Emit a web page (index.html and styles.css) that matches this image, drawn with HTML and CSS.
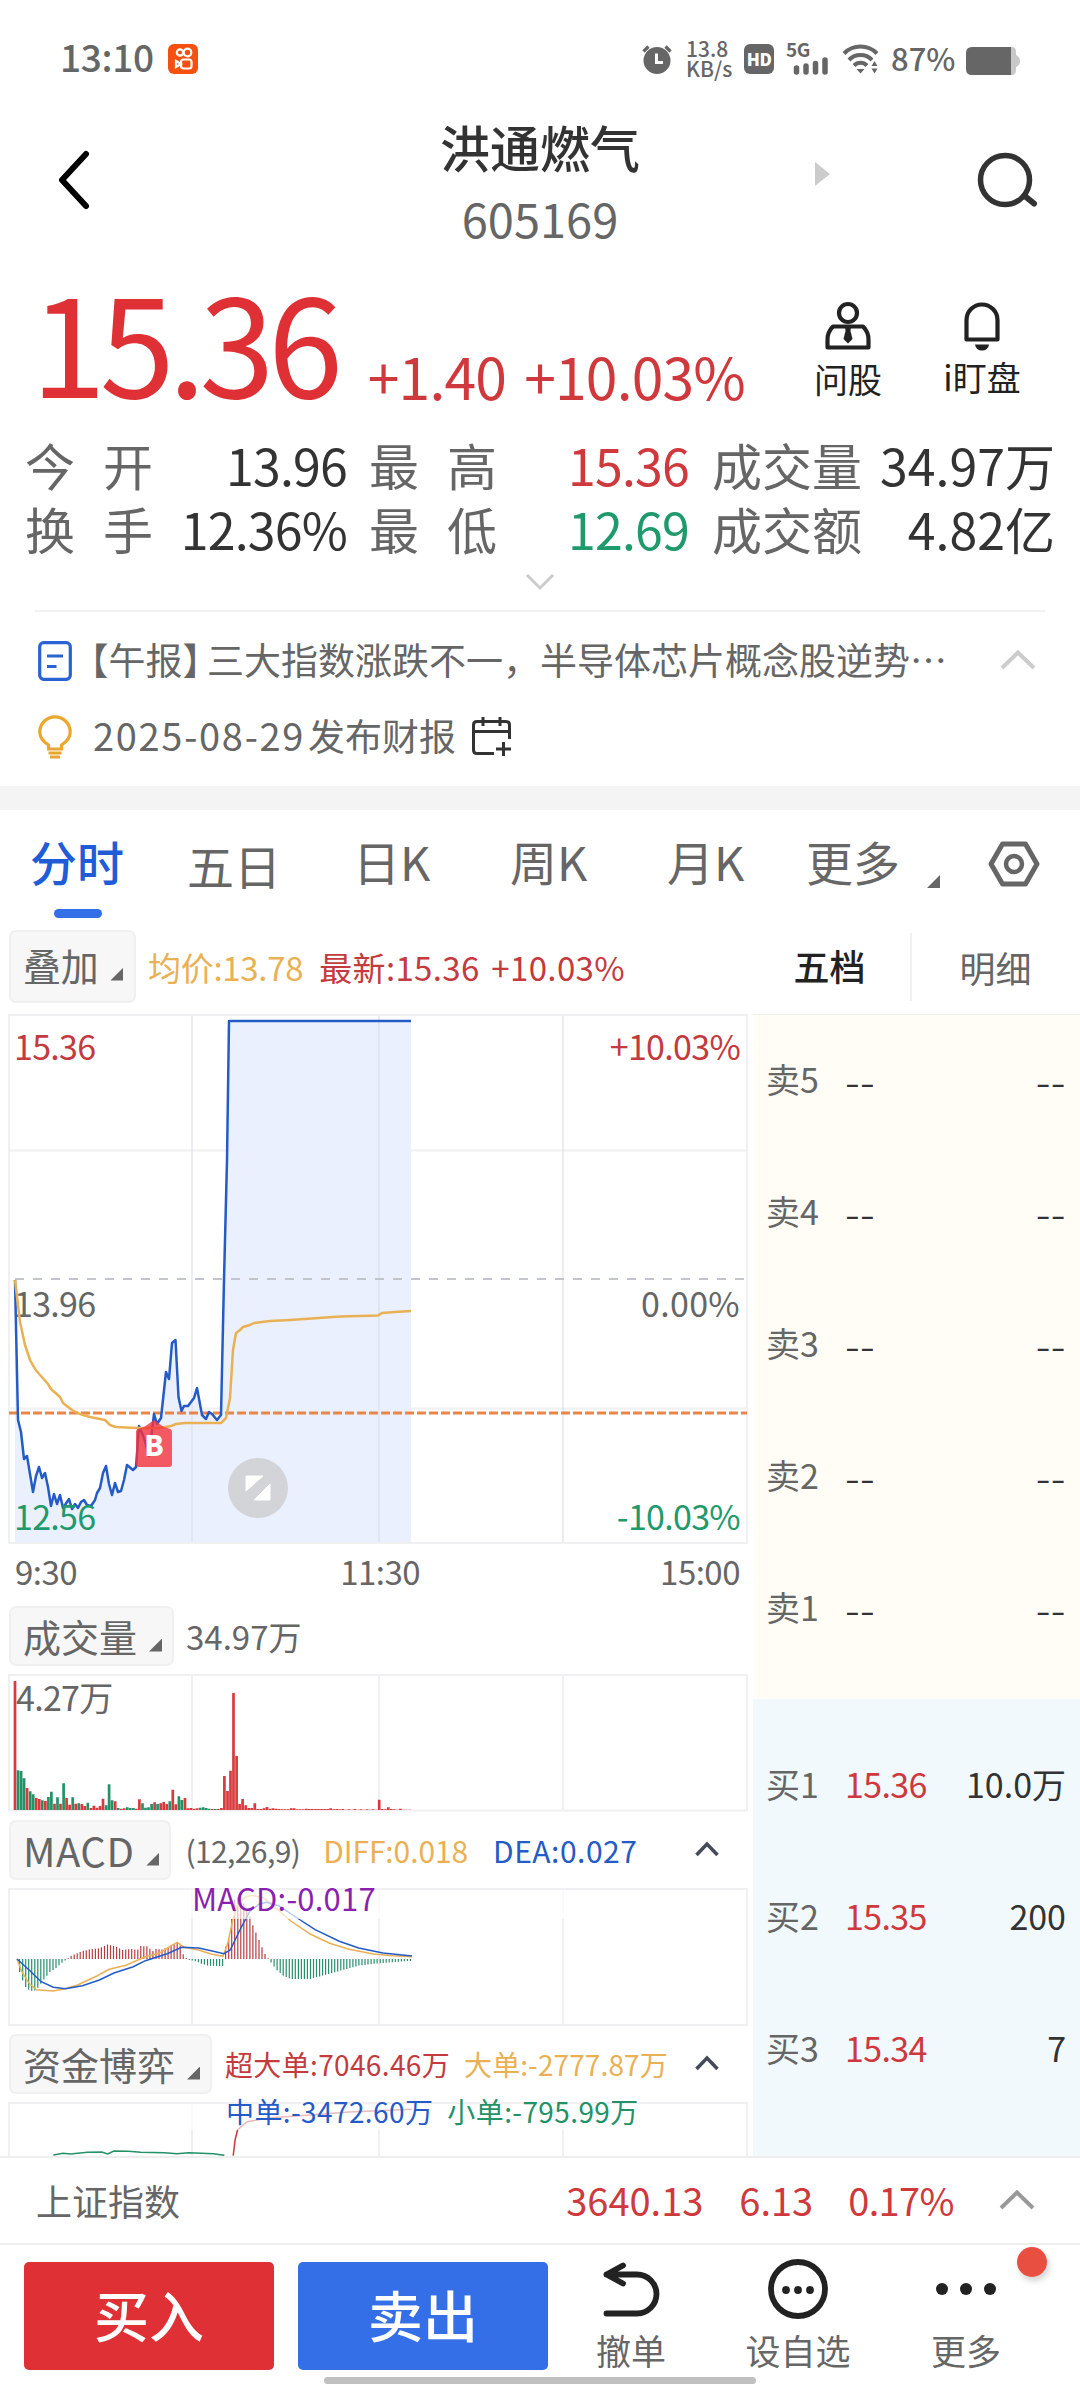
FILE: index.html
```html
<!DOCTYPE html>
<html lang="zh-CN">
<head>
<meta charset="utf-8">
<title>洪通燃气 605169</title>
<link rel="stylesheet" href="styles.css">
</head>
<body>
<div class="app">
  <header class="status">
    <span class="clock">13:10</span>
    <svg class="app-badge" width="30" height="30" viewBox="0 0 30 30"><rect width="30" height="30" rx="6" fill="#f5500f"/><g fill="none" stroke="#fff" stroke-width="2.2"><circle cx="12" cy="8.5" r="3.2"/><circle cx="19.5" cy="8.5" r="3.8"/><rect x="13" y="15.5" width="10.5" height="9" rx="2.5"/><path d="M13 20l-5-3v6z"/></g></svg>
    <span class="grow"></span>
    <svg class="alarm" width="32" height="30" viewBox="0 0 32 30"><circle cx="16" cy="16.500" r="13.500" fill="#666"/><path d="M2.500 7.500l5-5M29.500 7.500l-5-5" stroke="#666" stroke-width="3.200" fill="none"/><path d="M15.500 9.500v9h6.500" stroke="#fff" stroke-width="3" fill="none"/></svg>
    <span class="speed"><span>13.8</span><span>KB/s</span></span>
    <span class="hd">HD</span>
    <span class="cell"><b>5G</b><svg width="46" height="32" viewBox="0 0 46 32"><path d="M12.500 29v-4M22 29v-6M31.500 29v-8.500M41 29V17" stroke="#666" stroke-width="5.500" stroke-linecap="round"/></svg></span>
    <svg class="wifi" width="38" height="30" viewBox="0 0 38 30"><g fill="none" stroke="#666" stroke-width="4"><path d="M2 9.500a23 23 0 0 1 33 0M7 16a16 16 0 0 1 23 0M12 21.500a9 9 0 0 1 13 0"/></g><path d="M14.500 25h8l-4 4.500z" fill="#666"/><path d="M26 18h13v13H26z" fill="#fff"/><path d="M29.500 22l3-5 3 5zM29.500 24.500l3 5 3-5z" fill="#666"/></svg>
    <span class="pct">87%</span>
    <svg class="battery" width="54" height="28" viewBox="0 0 54 28"><path d="M44 0h2q4 0 4 5v3q4 2 4 6t-4 6v3q0 5-4 5h-2z" fill="#c8c8c8"/><path d="M6 0h39v28H6q-6 0-6-6V6q0-6 6-6z" fill="#666"/></svg>
  </header>

  <nav class="titlebar">
    <svg class="back" width="36" height="64" viewBox="0 0 36 64"><path d="M31 6L7 32l24 26" fill="none" stroke="#000" stroke-width="6" stroke-linecap="round" stroke-linejoin="round"/></svg>
    <div class="title"><h1>洪通燃气</h1><span class="code">605169</span></div>
    <svg class="next" width="15" height="24" viewBox="0 0 15 24"><path d="M0 0l15 12L0 24z" fill="#ccc"/></svg>
    <svg class="search" width="64" height="58" viewBox="0 0 64 58"><circle cx="29" cy="29" r="24.500" fill="none" stroke="#333" stroke-width="5.500"/><path d="M50 46l8 6.500" stroke="#333" stroke-width="6" stroke-linecap="round"/></svg>
  </nav>

  <section class="quote">
    <span class="price">15.36</span>
    <span class="delta">+1.40</span>
    <span class="delta rate">+10.03%</span>
    <span class="grow"></span>
    <div class="tool ask"><svg width="48" height="50" viewBox="0 0 48 50"><g fill="none" stroke="#222" stroke-width="4.200"><circle cx="24" cy="12" r="9"/><path d="M9 25.500h30q6 6 5.500 14v7H3.500v-7q-.5-8 5.500-14z" stroke-linejoin="round"/></g><path d="M21 26h6l-.5 4 2 8-4.500 4.500-4.500-4.500 2-8z" fill="#222"/></svg><span>问股</span></div>
    <div class="tool watch"><svg width="48" height="50" viewBox="0 0 48 50"><path d="M8.500 38.500V19a15.500 15.500 0 0 1 31 0v19.500z" fill="none" stroke="#222" stroke-width="4.200" stroke-linejoin="round"/><path d="M17 43.500h14q-1 6-7 6t-7-6z" fill="#222"/></svg><span>i盯盘</span></div>
  </section>

  <section class="stats">
    <span class="k two">今<i></i>开</span><span class="v">13.96</span>
    <span class="k two">最<i></i>高</span><span class="v up">15.36</span>
    <span class="k">成交量</span><span class="v wide">34.97万</span>
    <span class="k two">换<i></i>手</span><span class="v">12.36%</span>
    <span class="k two">最<i></i>低</span><span class="v down">12.69</span>
    <span class="k">成交额</span><span class="v wide">4.82亿</span>
  </section>
  <svg class="more-down" width="30" height="18" viewBox="0 0 30 18"><path d="M2 2l13 13L28 2" fill="none" stroke="#ccc" stroke-width="3"/></svg>

  <section class="news">
    <div class="news-row">
      <svg width="34" height="40" viewBox="0 0 34 40"><rect x="1.700" y="1.700" width="30.600" height="36.600" rx="4" fill="none" stroke="#2a62d4" stroke-width="3.200"/><path d="M9 15h16M9 25.500h9.500" stroke="#2a62d4" stroke-width="3.200"/></svg>
      <p class="headline"><span class="half">【</span>午报<span class="half close">】</span>三大指数涨跌不一，半导体芯片概念股逆势…</p>
      <svg class="fold" width="36" height="20" viewBox="0 0 36 20"><path d="M2 18L18 2.500 34 18" fill="none" stroke="#ccc" stroke-width="4"/></svg>
    </div>
    <div class="news-row">
      <svg width="34" height="44" viewBox="0 0 34 44"><g fill="none" stroke="#eaa72e" stroke-width="3.200"><path d="M10.500 34v-4C4 26 1.800 21.500 1.800 17a15.200 15.200 0 0 1 30.400 0c0 4.500-2.200 9-8.700 13v4z"/><path d="M10.500 38h13M12 42h10"/></g></svg>
      <p class="report"><span class="date">2025-08-29</span> <span>发布财报</span></p>
      <svg width="42" height="42" viewBox="0 0 42 42"><path d="M23 37.500H6q-3.500 0-3.500-3.500V9q0-3.500 3.500-3.500h29q3.500 0 3.500 3.500v14M2.500 15.500h36M12 1v9M29 1v9M32.500 26v14M25 33h15" fill="none" stroke="#333" stroke-width="3"/></svg>
    </div>
  </section>

  <nav class="tabs">
    <span class="tab on">分时</span><span class="tab t5">五日</span><span class="tab">日K</span><span class="tab">周K</span><span class="tab">月K</span><span class="tab">更多</span>
    <i class="tri"></i>
    <svg width="52" height="46" viewBox="0 0 52 46"><path d="M14.500 3h23l11.500 20-11.500 20h-23L3 23z" fill="none" stroke="#666" stroke-width="5" stroke-linejoin="round"/><circle cx="26" cy="23" r="8" fill="none" stroke="#666" stroke-width="4.500"/></svg>
  </nav>

  <div class="subbar">
    <span class="chip overlay">叠加<i class="tri"></i></span>
    <span class="avg">均价:13.78</span><span class="last">最新:15.36 +10.03%</span>
    <span class="grow"></span>
    <span class="level on">五档</span><span class="level">明细</span>
  </div>

  <main class="body">
    <div class="charts">
      <svg class="plot" width="752" height="534" viewBox="0 1012 752 534">
        <path d="M9 1150.500H747M9 1408.500H747" stroke="#f0f0f2" stroke-width="2"/>
        <path d="M15 1543V1280L18 1420 21 1432 24 1459 27 1456 33 1492 36 1476 39 1467 42 1478 45 1473 48 1487 51 1506 54 1494 57 1504 60 1495 63 1508 69 1499 72 1509 75 1504 78 1508 81 1502 84 1500 87 1505 91 1506 95 1500 97 1493 100 1488 103 1473 106 1466 109 1484 112 1495 115 1483 118 1492 121 1491 124 1480 127 1465 133 1470 136 1467 139 1426 144 1438 149 1456 154 1414 157 1424 161 1418 166 1372 169 1379 172 1343 175.500 1340 178.500 1397 181.500 1411 184 1406 188 1406 194 1398 197 1388 202 1415 206 1419 209 1412 212 1414 217 1420 221 1415 224 1280 227 1160 229 1021H411V1543z" fill="#eaf0fe"/>
        <path d="M192 1015V1543M379 1015V1543M563 1015V1543" stroke="#d8dce8" stroke-opacity=".5" stroke-width="2"/>
        <rect x="9" y="1015" width="738" height="528" fill="none" stroke="#f0f0f2" stroke-width="2"/>
        <path d="M15 1279H747" stroke="#c2c4cb" stroke-width="2" stroke-dasharray="9 9"/>
        <path d="M9 1413H747" stroke="#e8864a" stroke-width="3" stroke-dasharray="9 3"/>
        <g class="labels"><text x="14" y="1060" fill="#c43a3e">15.36</text><text x="14" y="1317" fill="#666">13.96</text>
        <text x="740" y="1060" fill="#c43a3e" text-anchor="end">+10.03%</text><text x="740" y="1317" fill="#666" text-anchor="end" class="zero">0.00%</text><text x="740" y="1530" fill="#1f9a6c" text-anchor="end">-10.03%</text></g>
        <path d="M15 1280L18 1420 21 1432 24 1459 27 1456 33 1492 36 1476 39 1467 42 1478 45 1473 48 1487 51 1506 54 1494 57 1504 60 1495 63 1508 69 1499 72 1509 75 1504 78 1508 81 1502 84 1500 87 1505 91 1506 95 1500 97 1493 100 1488 103 1473 106 1466 109 1484 112 1495 115 1483 118 1492 121 1491 124 1480 127 1465 133 1470 136 1467 139 1426 144 1438 149 1456 154 1414 157 1424 161 1418 166 1372 169 1379 172 1343 175.500 1340 178.500 1397 181.500 1411 184 1406 188 1406 194 1398 197 1388 202 1415 206 1419 209 1412 212 1414 217 1420 221 1415 224 1280 227 1160 229 1021H411" fill="none" stroke="#245bc7" stroke-width="2.500" stroke-linejoin="round"/>
        <path d="M15 1280L20 1322 25 1345 30 1360 35 1369 40 1375 48 1384 51 1389 60 1397 63 1403 72 1410 80 1414 90 1417 105 1420 110 1425 116 1427 137 1428 160 1428 171 1426 176 1424 185 1423H221L226 1418 230 1398 233 1350 236 1333 240 1330 243 1327 250 1325 254 1323 270 1321 290 1320 340 1316.500 378 1315.500 382 1313 395 1312 411 1311" fill="none" stroke="#eab054" stroke-width="2.500" stroke-linejoin="round"/>
        <path d="M154 1420l7 5q3 3 8 3.500 3 .5 3 4V1464q0 3-3 3h-30q-3 0-3-3V1432q0-3 3-3.500 5-.5 8-3.500z" fill="#f5333b" fill-opacity=".8"/>
        <text x="154" y="1456" text-anchor="middle" class="mark">B</text>
        <circle cx="258" cy="1488" r="30" fill="#d3d4d8"/>
        <path d="M246 1476h17l-17 15zM270 1484v16h-16z" fill="#fff" stroke="#fff"/>
        <g class="labels"><text x="14" y="1530" fill="#1f9a6c">12.56</text></g>
      </svg>
      <div class="axis"><span>9:30</span><span class="mid">11:30</span><span>15:00</span></div>

      <div class="head"><span class="chip">成交量<i class="tri"></i></span><span class="total">34.97万</span></div>
      <svg class="plot gap" width="752" height="138" viewBox="0 1674 752 138">
        <path d="M192 1675V1810M379 1675V1810M563 1675V1810" stroke="#f0f0f2" stroke-width="2"/>
        <rect x="9" y="1675" width="738" height="135.500" fill="none" stroke="#f0f0f2" stroke-width="2"/>
        <g class="labels"><text x="16" y="1711" fill="#666">4.27万</text></g>
        <path id="volUp" stroke="#d83a3e" stroke-width="2.700"/><path id="volDown" stroke="#249268" stroke-width="2.700"/>
      </svg>

      <div class="head second"><span class="chip macd">MACD<i class="tri"></i></span><span class="legend"><span>(12,26,9)</span><span class="orange diff">DIFF:0.018</span><span class="blue dea">DEA:0.027</span></span>
        <svg class="up-arrow" width="26" height="16" viewBox="0 0 26 16"><path d="M2.500 14L13 3l10.500 11" fill="none" stroke="#454a5a" stroke-width="3.500"/></svg></div>
      <div class="overlaid">
        <svg class="plot" width="752" height="138" viewBox="0 1888 752 138">
          <path d="M192 1889V2025M379 1889V2025M563 1889V2025" stroke="#f0f0f2" stroke-width="2"/>
          <rect x="9" y="1889" width="738" height="136" fill="none" stroke="#f0f0f2" stroke-width="2"/>
          <path id="macdUp" stroke="#b83c40" stroke-width="1.200"/><path id="macdDown" stroke="#25906a" stroke-width="1.200"/>
          <path id="diff" fill="none" stroke="#eab054" stroke-width="1.500"/><path id="dea" fill="none" stroke="#245bc7" stroke-width="1.500"/>
          <path d="M12 1890H744V1919H12z" fill="#fff" fill-opacity=".65"/>
        </svg>
        <span class="wrapped purple">MACD:-0.017</span>
      </div>

      <div class="head third"><span class="chip">资金博弈<i class="tri"></i></span><span class="legend funds"><span class="red">超大单:7046.46万</span><span class="orange">大单:-2777.87万</span></span>
        <svg class="up-arrow" width="26" height="16" viewBox="0 0 26 16"><path d="M2.500 14L13 3l10.500 11" fill="none" stroke="#454a5a" stroke-width="3.500"/></svg></div>
      <div class="overlaid">
        <svg class="plot" width="752" height="54" viewBox="0 2102 752 54">
          <path d="M192 2103V2160M379 2103V2160M563 2103V2160" stroke="#f0f0f2" stroke-width="2"/>
          <rect x="9" y="2103" width="738" height="80" fill="none" stroke="#f0f0f2" stroke-width="2"/>
          <path id="big" fill="none" stroke="#c43a3e" stroke-width="1.500"/><path id="small" fill="none" stroke="#249268" stroke-width="1.500"/>
          <path d="M12 2104H744V2130H12z" fill="#fff" fill-opacity=".65"/>
        </svg>
        <span class="wrapped flows"><span class="blue">中单:-3472.60万</span><span class="green">小单:-795.99万</span></span>
      </div>
    </div>

    <aside class="book">
      <div class="asks">
        <div class="row"><span>卖5</span><b>--</b><b class="q">--</b></div>
        <div class="row"><span>卖4</span><b>--</b><b class="q">--</b></div>
        <div class="row"><span>卖3</span><b>--</b><b class="q">--</b></div>
        <div class="row"><span>卖2</span><b>--</b><b class="q">--</b></div>
        <div class="row"><span>卖1</span><b>--</b><b class="q">--</b></div>
      </div>
      <div class="bids">
        <div class="row"><span>买1</span><em>15.36</em><em class="q">10.0万</em></div>
        <div class="row"><span>买2</span><em>15.35</em><em class="q">200</em></div>
        <div class="row"><span>买3</span><em>15.34</em><em class="q">7</em></div>
      </div>
    </aside>
  </main>

  <div class="index"><span class="name">上证指数</span><span class="i1">3640.13</span><span class="i2">6.13</span><span class="i3">0.17%</span>
    <svg width="36" height="20" viewBox="0 0 36 20"><path d="M2 18L18 2.500 34 18" fill="none" stroke="#999" stroke-width="4"/></svg></div>

  <footer class="actions">
    <button class="buy">买入</button><button class="sell">卖出</button>
    <div class="act undo"><svg width="62" height="56" viewBox="0 0 62 56"><path d="M23 3.500L6.500 12.500 23 21.500M6.500 12.500H37a19.500 19.500 0 0 1 0 39H6.500" fill="none" stroke="#222" stroke-width="5.800" stroke-linecap="round" stroke-linejoin="round"/></svg><span>撤单</span></div>
    <div class="act fav"><svg width="62" height="62" viewBox="0 0 62 62"><circle cx="31" cy="31" r="27" fill="none" stroke="#222" stroke-width="5.800"/><g fill="#222"><circle cx="19" cy="32" r="3.900"/><circle cx="31" cy="32" r="3.900"/><circle cx="43" cy="32" r="3.900"/></g></svg><span>设自选</span></div>
    <div class="act dots"><svg width="62" height="62" viewBox="0 0 62 62"><g fill="#222"><circle cx="7" cy="31" r="6"/><circle cx="31" cy="31" r="6"/><circle cx="55" cy="31" r="6"/></g></svg><span>更多</span><i class="badge"></i></div>
  </footer>
  <div class="home"></div>
</div>
<script src="script.js"></script>
</body>
</html>
```
FILE: styles.css
```css
* { box-sizing: border-box; }
body { margin: 0; background: #fff; font-family: "Noto Sans CJK SC", "Noto Sans", sans-serif; color: #666; }
h1, p { margin: 0; font-weight: 400; }
b, em { font-weight: 400; font-style: normal; }
svg { display: block; flex: none; }
span { white-space: nowrap; }
.grow { flex: 1; }
.app { width: 1080px; height: 2388px; overflow: hidden; display: flex; flex-direction: column; }
.app > * { flex: none; }

.status { height: 118px; display: flex; align-items: center; padding: 0 60px 0 60px; }
.clock { font-size: 37px; line-height: 40px; margin-top: -7px; font-weight: 500; width: 93px; letter-spacing: -.3px; }
.app-badge { margin-left: 15px; }
.speed { display: flex; flex-direction: column; width: 46px; margin: 0 0 3px 13px; font-size: 21px; line-height: 20px; font-weight: 500; }
.hd { width: 30px; height: 30px; border-radius: 6px; margin-left: 12px; background: #666; color: #fff; font-size: 17px; line-height: 29px; font-weight: 900; text-align: center; letter-spacing: -.5px; }
.cell { position: relative; margin-left: 10px; margin-right: 10px; }
.cell b { position: absolute; left: 2px; top: -4px; font-size: 19px; line-height: 19px; font-weight: 700; letter-spacing: -.5px; }
.wifi { margin-left: 2px; }
.pct { font-size: 31px; line-height: 40px; margin: -3px 11px 0 11px; font-weight: 500; width: 64px; }
.battery { margin-top: 3px; }

.titlebar { height: 142px; display: flex; position: relative; justify-content: center; }
.title { display: flex; flex-direction: column; align-items: center; }
.title h1 { font-size: 50px; line-height: 60px; margin-top: -2px; color: #333; font-weight: 500; }
.code { font-size: 47px; line-height: 60px; margin-top: 12px; }
.back { position: absolute; left: 55px; top: 30px; }
.next { position: absolute; left: 815px; top: 44px; }
.search { position: absolute; left: 976px; top: 33px; }

.quote { height: 163px; display: flex; padding: 0 59px 0 31px; }
.price { color: #df3135; font-size: 135px; line-height: 120px; letter-spacing: -6.300px; margin-top: 19px; }
.delta { color: #cf393d; font-size: 57px; line-height: 60px; margin: 85px 0 0 31px; letter-spacing: -.8px; }
.delta.rate { margin-left: 18px; }
.tool { display: flex; flex-direction: column; align-items: center; color: #222; font-size: 34px; line-height: 40px; padding-top: 41px; width: 78px; }
.tool span { margin-top: 8px; }
.watch { margin-left: 56px; }
.watch span { margin-top: 6px; }

.stats { height: 132px; padding: 12px 24px 0 25px; display: grid; grid-template-columns: 128px 197px 128px 196px 150px 1fr; grid-template-rows: 64px 64px; font-size: 50px; line-height: 58px; }
.k.two { display: flex; }
.k i { width: 28px; flex: none; }
.v { color: #333; text-align: right; letter-spacing: -.8px; padding-right: 3px; }
.v.wide { letter-spacing: 0; padding-right: 1px; }
.stats > :nth-child(3), .stats > :nth-child(9) { margin-left: 19px; }
.stats > :nth-child(5), .stats > :nth-child(11) { margin-left: 38px; }
.stats > :nth-child(4), .stats > :nth-child(10) { margin-right: -18px; }
.v.up { color: #cf393d; }
.v.down { color: #1f9a6c; }
.more-down { margin: 18px auto 0 525px; }

.news { margin: 19px 35px 0; border-top: 2px solid #f2f2f2; height: 176px; padding: 11px 9px 0 3px; font-size: 37px; }
.news-row { height: 76px; display: flex; align-items: center; }
.news-row p { line-height: 50px; margin-top: -5px; display: flex; white-space: nowrap; }
.headline { margin-left: 18px; width: 911px; }
.half { font-feature-settings: "halt"; }
.half.close { margin-right: 6px; }
.fold { margin-top: -2px; }
.report { margin: 0 15px 0 21px; }
.date { font-size: 38px; letter-spacing: 1.700px; margin-right: 3px; }

.tabs { border-top: 24px solid #f4f4f4; height: 141px; display: flex; align-items: flex-start; padding: 25px 0 0 30px; font-size: 47px; line-height: 52px; }
.tab { width: 158px; flex: none; }
.tab:nth-child(1) { width: 157px; }
.tab:nth-child(2) { width: 166px; margin-top: 4px; }
.tab:nth-child(3) { width: 157px; }
.tab:nth-child(4) { width: 157px; }
.tab:nth-child(5) { width: 139px; }
.tab:nth-child(6) { width: 121px; }
.tab.on { color: #1f5cd6; font-weight: 500; }
.tab.on::after { content: ""; display: block; width: 48px; height: 9px; border-radius: 5px; background: #336fe6; margin: 22px 0 0 24px; }
.tri { width: 13px; height: 13px; background: #666; clip-path: polygon(100% 0, 100% 100%, 0 100%); flex: none; }
.tabs .tri { margin: 40px 48px 0 0; }
.tabs svg { margin-top: 6px; }

.subbar { height: 86px; display: flex; align-items: center; padding: 0 0 9px 9px; font-size: 33px; line-height: 40px; }
.chip { border: 2px solid #f0f0f0; background: #f7f7f7; border-radius: 7px; display: flex; align-items: center; font-size: 38px; line-height: 40px; height: 60px; padding: 0 10px 0 12px; }
.chip .tri { margin: 18px 0 0 12px; }
.chip.overlay { height: 73px; width: 127px; padding-bottom: 3px; margin-top: 2px; letter-spacing: -.3px; }
.avg { color: #eab054; margin: 3px 0 0 12px; letter-spacing: -.3px; }
.last { color: #c43a3e; margin: 3px 0 0 16px; word-spacing: 4px; letter-spacing: .35px; }
.level { width: 168px; text-align: center; font-size: 36px; padding-right: 1px; margin-top: 3px; }
.level.on { color: #222; font-weight: 500; width: 163px; border-right: 2px solid #f0f0f0; height: 68px; line-height: 64px; padding: 0; }

.body { height: 1144px; display: flex; overflow: hidden; margin-top: -1px; }
.charts { width: 753px; flex: none; }
.plot { overflow: hidden; }
.labels { font-size: 34px; letter-spacing: -.7px; }
.zero { letter-spacing: .3px; }
.mark { font-size: 28px; font-weight: 900; fill: #fff; }
.axis { height: 58px; display: flex; justify-content: space-between; padding: 0 13px 0 15px; font-size: 33px; line-height: 50px; letter-spacing: -.5px; }
.axis .mid { margin-left: 23px; }
.head { height: 64px; display: flex; align-items: center; padding: 0 33px 0 9px; font-size: 34px; line-height: 40px; }
.total { margin-left: 12px; font-size: 33px; }
.gap { margin-top: 6px; margin-bottom: 4px; }
.head.second { height: 68px; margin-bottom: 4px; }
.head.third { height: 68px; margin-top: 4px; margin-bottom: 4px; }
.macd { font-size: 40px; letter-spacing: .5px; }
.legend { display: flex; flex: 1; font-size: 30px; margin-left: 14px; letter-spacing: -.6px; }
.legend.funds { font-size: 28px; letter-spacing: .35px; margin-left: 13px; }
.diff { margin: 0 25px 0 23px; letter-spacing: -.1px; }
.dea { letter-spacing: .5px; }
.funds .orange { margin-left: 14px; letter-spacing: .1px; }
.up-arrow { margin-top: -2px; }
.orange { color: #eab054; } .blue { color: #245bc7; } .red { color: #c43a3e; } .green { color: #249268; } .purple { color: #8a1fb0; }
.overlaid { position: relative; }
.wrapped { position: absolute; left: 192px; top: -10px; font-size: 31px; line-height: 40px; letter-spacing: .2px; }
.flows { left: 226px; top: -11px; font-size: 28px; display: flex; gap: 14px; letter-spacing: .4px; }

.book { flex: 1; border-top: 1px solid #eee; font-size: 34px; line-height: 44px; margin-top: 2px; }
.asks { background: #fffdf6; height: 684px; }
.bids { background: #f1f9fd; height: 460px; padding-top: 21px; }
.row { height: 132px; display: flex; align-items: center; padding: 0 14px 4px 13px; }
.row > :nth-child(2) { margin-left: 26px; flex: 1; letter-spacing: -.6px; color: #cf393d; }
.row b, .row > b:nth-child(2) { color: #333; font-size: 44px; font-weight: 300; letter-spacing: .5px; }
.row .q { color: #333; }

.index { border-top: 2px solid #eee; height: 87px; display: flex; align-items: center; padding: 0 45px 1px 36px; color: #cf393d; font-size: 38px; line-height: 50px; letter-spacing: 0; }
.index .name { color: #666; font-size: 36px; flex: 1; }
.index .i2 { margin-left: 36px; } .index .i3 { margin: 0 45px 0 35px; letter-spacing: -.6px; }

.actions { border-top: 2px solid #eee; height: 134px; display: flex; padding: 17px 0 0 24px; font-size: 35px; line-height: 40px; }
.actions button { width: 250px; height: 108px; border: 0; border-radius: 5px; background: #df3135; color: #fff; font: 500 55px/100px "Noto Sans CJK SC", sans-serif; padding: 0 0 6px; margin-right: 24px; }
.actions .sell { background: #346fe7; margin-right: 0; }
.act { display: flex; flex-direction: column; align-items: center; position: relative; width: 106px; }
.act span { margin-top: auto; margin-bottom: 7px; }
.undo { margin-left: 30px; }
.fav { margin-left: 61px; } .fav svg, .dots svg { margin-top: -4px; }
.dots { margin-left: 62px; }
.badge { position: absolute; left: 104px; top: -15px; width: 30px; height: 30px; border-radius: 50%; background: #e94f40; box-shadow: 2px 4px 6px rgba(0,0,0,.18); }
.home { width: 432px; height: 7px; border-radius: 4px; background: #c0c0c0; margin: 0 auto 0 324px; }
```
FILE: script.js
```js
// Minute volumes; negative values are falling minutes. Unit: 1/3 px.
const volume = [387,-119,-117,-95,66,-56,-47,36,33,-29,27,-39,-55,19,-38,19,-80,36,16,-38,19,-20,18,12,-22,6,13,7,12,34,-14,-77,-29,26,-6,4,5,-8,-6,-6,4,32,-20,-7,-8,-18,23,-18,20,24,18,-26,61,17,-41,-30,36,5,6,4,5,-7,-8,-6,-4,3,-3,3,6,102,57,118,351,162,18,33,14,6,6,20,3,3,5,9,4,5,4,3,2,2,2,5,5,2,2,2,4,3,3,3,3,3,3,3,5,2,3,2,3,1,2,1,3,1,2,1,2,1,2,1,31,3,2,8,3,2,1,4,1,1,1];
const set = (id, d) => document.getElementById(id).setAttribute("d", d);
const bar = (x, base, h) => `M${x.toFixed(1)} ${base}V${(base - h).toFixed(1)}`;
let up = "", down = "";
volume.forEach((v, i) => {
  const seg = bar(15 + i * 3.035, 1810, Math.abs(v) / 3);
  if (v < 0) down += seg; else up += seg;
});
set("volUp", up); set("volDown", down);

// MACD histogram envelope, sampled every minute.
const env = [[35,0],[40,-37],[46,-62],[53,-84],[60,-93],[70,-97],[78,-86],[84,-75],[92,-58],[105,-36],[115,-28],[125,-14],[137,-2],[141,4],[150,12],[170,24],[190,30],[205,32],[222,44],[240,36],[253,27],[270,30],[284,28],[290,39],[303,38],[315,24],[322,30],[334,28],[350,38],[366,50],[372,40],[378,14],[384,3],[390,-3],[405,-7],[415,-14],[430,-20],[460,-21],[463,10],[466,42],[472,62],[478,120],[484,178],[496,190],[508,150],[515,130],[521,104],[540,37],[547,14],[554,0],[560,-12],[572,-34],[585,-51],[600,-60],[640,-60],[665,-50],[700,-36],[740,-20],[780,-13],[852,-5]];
const X = x => x / 2.063, Y = y => 1820 + y / 3;
up = down = "";
for (let x = 40.5; x < 853; x += 6.25) {
  const k = env.findIndex(p => p[0] >= x), a = env[k - 1], b = env[k];
  if (!b) break;
  const h = a[1] + (b[1] - a[1]) * (x - a[0]) / (b[0] - a[0]);
  if (h < 0) down += bar(X(x), 1959, h / 3); else up += bar(X(x), 1959, h / 3);
}
set("macdUp", up); set("macdDown", down);

const line = pts => pts.map(([x, y], i) => (i ? "L" : "M") + X(x).toFixed(1) + " " + Y(y).toFixed(1)).join("");
set("diff", line([[35,417],[45,455],[60,490],[75,509],[110,513],[130,508],[160,495],[200,468],[225,448],[260,436],[300,410],[330,398],[350,380],[366,367],[380,382],[410,390],[435,402],[460,409],[470,370],[480,300],[490,255],[505,232],[520,226],[545,235],[570,265],[600,303],[640,342],[680,370],[720,388],[770,402],[810,407],[850,410]]));
set("dea", line([[35,417],[60,450],[85,485],[110,502],[135,506],[170,497],[205,480],[235,459],[275,440],[300,422],[345,401],[375,382],[410,384],[440,394],[462,401],[475,390],[495,330],[515,275],[535,252],[550,247],[575,257],[610,291],[650,329],[700,364],[740,384],[790,399],[850,408]]));
set("big", line([[481,1007],[485,960],[490,930],[510,905],[560,893],[640,885],[720,876],[850,868]]));
set("small", line([[110,1005],[130,1000],[145,1002],[180,997],[210,996],[222,1002],[235,993],[265,994],[290,997],[340,998],[365,1001],[390,998],[440,1001],[463,1006]]));
```
